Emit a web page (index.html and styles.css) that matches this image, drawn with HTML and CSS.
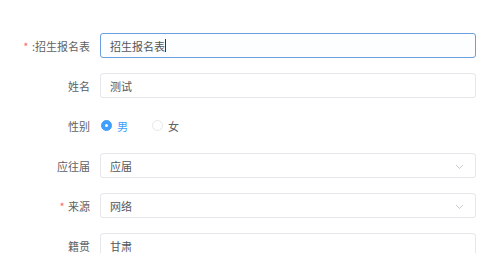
FILE: index.html
```html
<!DOCTYPE html>
<html>
<head>
<meta charset="utf-8">
<link rel="stylesheet" href="styles.css">
</head>
<body>
<form class="form">
  <div class="row">
    <div class="label"><span class="req">*</span> :招生报名表</div>
    <div class="field focus"><span class="val">招生报名表</span><span class="caret"></span></div>
  </div>
  <div class="row">
    <div class="label">姓名</div>
    <div class="field"><span class="val">测试</span></div>
  </div>
  <div class="row">
    <div class="label">性别</div>
    <div class="radios">
      <span class="radio on"><span class="dot"></span><span class="rlabel">男</span></span>
      <span class="radio"><span class="dot"></span><span class="rlabel">女</span></span>
    </div>
  </div>
  <div class="row">
    <div class="label">应往届</div>
    <div class="field select"><span class="val">应届</span>
      <svg class="chev" width="9" height="6" viewBox="0 0 9 6"><path d="M1 1l3.5 3.5L8 1" fill="none" stroke="#c7c9ce" stroke-width="1"/></svg>
    </div>
  </div>
  <div class="row">
    <div class="label"><span class="req">*</span> 来源</div>
    <div class="field select"><span class="val">网络</span>
      <svg class="chev" width="9" height="6" viewBox="0 0 9 6"><path d="M1 1l3.5 3.5L8 1" fill="none" stroke="#c7c9ce" stroke-width="1"/></svg>
    </div>
  </div>
  <div class="row">
    <div class="label">籍贯</div>
    <div class="field"><span class="val">甘肃</span></div>
  </div>
</form>
</body>
</html>
```
FILE: styles.css
```css
html, body {
  margin: 0;
  padding: 0;
  background: #fff;
  overflow: hidden;
}
body {
  font-family: "Noto Sans CJK SC", "Noto Sans", sans-serif;
  font-size: 11px;
  color: #5f6165;
}
.form {
  padding: 33px 25px 0 0;
  display: flex;
  flex-direction: column;
  gap: 15px;
}
.row {
  display: flex;
  align-items: center;
  height: 25px;
}
.label {
  width: 100px;
  flex: none;
  padding-right: 10px;
  box-sizing: border-box;
  text-align: right;
  color: #606266;
  white-space: nowrap;
}
.req {
  color: #f56c6c;
  margin-right: 1px;
}
.field {
  width: 376px;
  height: 25px;
  box-sizing: border-box;
  border: 1px solid #e6e7ea;
  border-radius: 3px;
  display: flex;
  align-items: center;
  padding-left: 9px;
  color: #55575b;
  position: relative;
}
.field.focus {
  border-color: #6b9fdf;
  background: #fcfeff;
}
.caret {
  display: inline-block;
  width: 1px;
  height: 13px;
  background: #333;
  margin-left: 0;
}
.select .chev {
  position: absolute;
  right: 11px;
  top: 10px;
}
.radios {
  display: flex;
  align-items: center;
  gap: 24px;
  padding-left: 1px;
}
.radio {
  display: flex;
  align-items: center;
  gap: 5px;
}
.dot {
  width: 11px;
  height: 11px;
  box-sizing: border-box;
  border-radius: 50%;
  border: 1px solid #e6e7ea;
  background: #fff;
  position: relative;
}
.radio.on .dot {
  border-color: #409eff;
  background: #409eff;
}
.radio.on .dot::after {
  content: "";
  position: absolute;
  left: 3px;
  top: 3px;
  width: 3px;
  height: 3px;
  border-radius: 50%;
  background: #fff;
}
.radio.on .rlabel {
  color: #409eff;
}
```
